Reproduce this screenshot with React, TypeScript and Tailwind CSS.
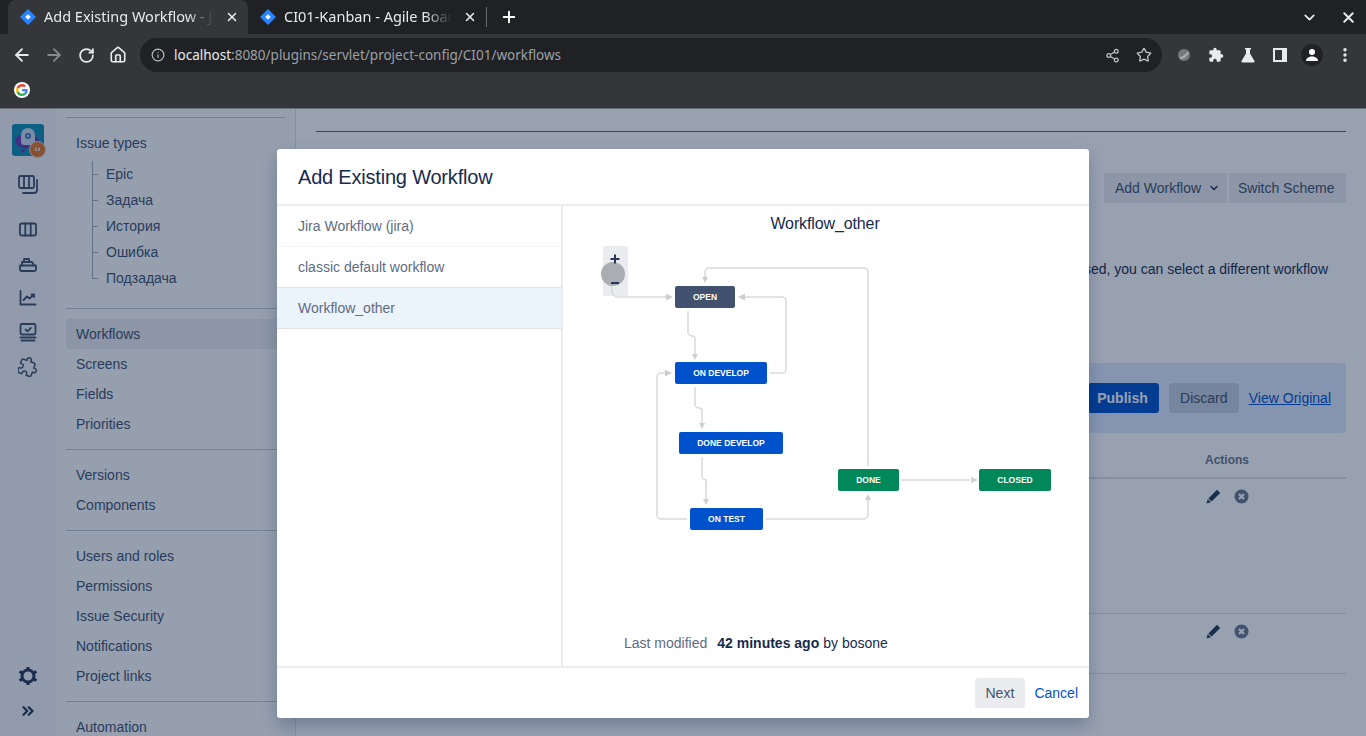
import React from 'react';
import {
  ArrowLeft,
  ArrowRight,
  RotateCw,
  Home,
  Info,
  Share2,
  Star,
  X,
  Plus,
  ChevronDown,
  ChevronsRight,
  MoreVertical,
} from 'lucide-react';

const FONT = "font-['Liberation_Sans','Noto_Sans_CJK_SC',sans-serif]";

const JiraIcon = () => (
  <svg width="16" height="16" viewBox="0 0 16 16" className="shrink-0">
    <path d="M8 0l8 8-8 8-8-8z" fill="#2684ff" />
    <path d="M8 5.2L10.8 8 8 10.8 5.2 8z" fill="#fff" />
  </svg>
);

const GoogleIcon = () => (
  <div className="w-4 h-4 rounded-full bg-white flex items-center justify-center">
    <svg width="12" height="12" viewBox="0 0 48 48">
      <path fill="#EA4335" d="M24 9.5c3.5 0 6.700 1.200 9.200 3.600l6.900-6.900C35.900 2.400 30.500 0 24 0 14.600 0 6.500 5.400 2.600 13.200l8 6.200C12.500 13.700 17.800 9.500 24 9.500z" />
      <path fill="#4285F4" d="M46.900 24.500c0-1.600-.1-3.100-.4-4.500H24v9h12.900c-.6 3-2.200 5.500-4.800 7.200l7.700 6c4.500-4.200 7.100-10.300 7.100-17.700z" />
      <path fill="#FBBC05" d="M10.500 28.600c-.5-1.500-.8-3-.8-4.600s.3-3.200.8-4.600l-8-6.200C.9 16.500 0 20.100 0 24s.9 7.500 2.600 10.800l7.900-6.200z" />
      <path fill="#34A853" d="M24 48c6.500 0 11.900-2.100 15.900-5.800l-7.700-6c-2.200 1.500-4.900 2.300-8.200 2.300-6.200 0-11.500-4.200-13.400-9.900l-8 6.200C6.500 42.600 14.600 48 24 48z" />
    </svg>
  </div>
);

const Tab = ({ title, active, width }: { title: string; active?: boolean; width: string }) => (
  <div className={`flex items-center h-[34px] pl-3 pr-[9px] ${width} ${active ? 'bg-[#35363a] rounded-t-lg' : ''}`}>
    <JiraIcon />
    <span className="ml-2 flex-1 overflow-hidden whitespace-nowrap text-[14.500px] text-[#e8eaed] font-['Noto_Sans',sans-serif] [mask-image:linear-gradient(90deg,#000_82%,transparent_98%)]">
      {title}
    </span>
    <X size={14} strokeWidth={2.6} className="ml-[8px] text-[#e8eaed] shrink-0" />
  </div>
);

const BrowserChrome = () => (
  <div className="h-[109px] bg-[#35363a] border-b border-[#6a6e78] flex flex-col shrink-0">
    <div className="h-[34px] bg-[#202124] flex items-center">
      <div className="w-2" />
      <Tab title="Add Existing Workflow - Jira" active width="w-[240px]" />
      <Tab title="CI01-Kanban - Agile Board" width="w-[238px]" />
      <div className="w-px h-5 bg-[#6a6b6e]" />
      <Plus size={18} strokeWidth={2.6} className="ml-[13px] text-white" />
      <div className="flex-1" />
      <ChevronDown size={17} strokeWidth={2.4} className="text-[#e8eaed] mr-[22px]" />
      <X size={17} strokeWidth={2.8} className="text-[#e8eaed] mr-[9px]" />
    </div>
    <div className="h-[38px] flex items-center pt-[4px]">
      <ArrowLeft size={20} strokeWidth={2.2} className="ml-3 text-[#e8eaed]" />
      <ArrowRight size={20} strokeWidth={2.2} className="ml-3 text-[#85878a]" />
      <RotateCw size={17} strokeWidth={2.5} className="ml-[14px] text-[#e8eaed]" />
      <Home size={18} strokeWidth={2.2} className="ml-[14px] text-[#e8eaed]" />
      <div className="ml-[13px] w-[1022px] h-[34px] rounded-full bg-[#202124] flex items-center">
        <Info size={14} className="ml-[11px] text-[#bdc1c6]" />
        <span className="ml-[9px] text-[13.5px] font-['Noto_Sans',sans-serif] text-[#e8eaed]">
          localhost<span className="text-[#9aa0a6]">:8080/plugins/servlet/project-config/CI01/workflows</span>
        </span>
        <div className="flex-1" />
        <Share2 size={15} className="text-[#bdc1c6]" />
        <Star size={16} strokeWidth={2} className="ml-[16px] mr-[10px] text-[#bdc1c6]" />
      </div>
      <svg width="14" height="14" viewBox="0 0 14 14" className="ml-[15px]">
        <circle cx="7" cy="7" r="6" fill="#75777b" />
        <path d="M2 9c3 0 6-2 9-6l1 2c-2 3-5 6-8 6z" fill="#a8aaad" />
      </svg>
      <svg width="16" height="16" viewBox="0 0 24 24" className="ml-[17px]" fill="#e8eaed">
        <path d="M20.500 11H19V7a2 2 0 0 0-2-2h-4V3.500a2.500 2.500 0 0 0-5 0V5H4a2 2 0 0 0-2 2v3.800h1.500a2.700 2.700 0 0 1 0 5.400H2V20a2 2 0 0 0 2 2h3.800v-1.500a2.700 2.700 0 0 1 5.400 0V22H17a2 2 0 0 0 2-2v-4h1.500a2.500 2.500 0 0 0 0-5z" />
      </svg>
      <svg width="16" height="16" viewBox="0 0 16 16" className="ml-4" fill="#e8eaed">
        <path d="M5 1h6v1.500h-1v4l4.500 7.500a1 1 0 0 1-.9 1.500H2.400a1 1 0 0 1-.9-1.500L6 6.500v-4H5z" />
      </svg>
      <svg width="14" height="14" viewBox="0 0 14 14" className="ml-[17px]">
        <rect width="14" height="14" fill="#e8eaed" />
        <rect x="2" y="2" width="7" height="10" fill="#35363a" />
      </svg>
      <div className="ml-[14px] w-[22px] h-[22px] rounded-full bg-[#202124] flex items-center justify-center">
        <svg width="14" height="14" viewBox="0 0 14 14" fill="#fff">
          <circle cx="7" cy="4" r="3" />
          <path d="M1 13c0-3 3-4.500 6-4.500s6 1.500 6 4.500z" />
        </svg>
      </div>
      <MoreVertical size={18} strokeWidth={2.6} className="ml-[13px] text-[#e8eaed]" />
    </div>
    <div className="flex-1 flex items-center pl-[14px] -mt-px">
      <GoogleIcon />
    </div>
  </div>
);

const railStroke = { fill: 'none', stroke: '#42526e', strokeWidth: 1.8, strokeLinecap: 'round', strokeLinejoin: 'round' } as const;

const Rail = () => (
  <div className="w-14 shrink-0 bg-[#f4f5f7] flex flex-col items-center h-[627px]">
    <div className="relative mt-[15px] w-8 h-8 rounded-[3px] bg-[#0d8fb3]">
      <svg width="32" height="32" viewBox="0 0 32 32">
        <ellipse cx="15" cy="17" rx="12" ry="7.500" fill="#6a3fb5" />
        <path d="M9 11a7 7 0 0 1 14 0v7a3 3 0 0 1-3 3h-8a3 3 0 0 1-3-3z" fill="#cdd9ec" />
        <circle cx="16" cy="12" r="3" fill="#3a78c0" />
        <circle cx="16" cy="12" r="1" fill="#fff" />
        <path d="M9 25l1 4 4-3z" fill="#6a3fb5" />
      </svg>
      <div className="absolute -right-[2px] -bottom-[2px] w-[17px] h-[17px] rounded-full bg-[#e0762a] border-[1.5px] border-[#d9dde3] flex items-center justify-center text-[9px] leading-none font-bold text-white">
        ‹›
      </div>
    </div>
    <svg width="22" height="22" viewBox="0 0 22 22" className="mt-[18px]">
      <g {...railStroke}>
        <rect x="2" y="2" width="15" height="12" rx="1.500" />
        <path d="M7 2v12M12 2v12" />
        <path d="M20 6v10a3 3 0 0 1-3 3H6" />
      </g>
    </svg>
    <svg width="20" height="20" viewBox="0 0 20 20" className="mt-[24px]">
      <g {...railStroke}>
        <rect x="2" y="3.500" width="16" height="12" rx="1.500" />
        <path d="M7.300 3.500v12M12.700 3.500v12" />
      </g>
    </svg>
    <svg width="20" height="20" viewBox="0 0 20 20" className="mt-[14px]">
      <g {...railStroke}>
        <path d="M2 11.500h16v4a1.500 1.500 0 0 1-1.500 1.500h-13A1.500 1.500 0 0 1 2 15.500z" />
        <path d="M4 11.500V8h10l2 3.500M6 8V5h5v3" />
      </g>
    </svg>
    <svg width="20" height="20" viewBox="0 0 20 20" className="mt-[14px]">
      <g {...railStroke}>
        <path d="M2.500 3v13.500h15" />
        <path d="M5.500 12l3.500-3.500 2.500 2L16 6.500M13.500 6.500H16V9" />
      </g>
    </svg>
    <svg width="20" height="22" viewBox="0 0 20 22" className="mt-[14px]">
      <g {...railStroke}>
        <rect x="2.500" y="2" width="15" height="10.500" rx="1.500" />
        <path d="M7.500 7.500l2 1.800 3.300-3.300M2.500 15.500h15M3.500 18.500h13" />
      </g>
    </svg>
    <svg width="20" height="20" viewBox="0 0 24 24" className="mt-[13px]">
      <path
        {...railStroke}
        d="M20.500 11H19V7a2 2 0 0 0-2-2h-4V3.500a2.500 2.500 0 0 0-5 0V5H4a2 2 0 0 0-2 2v3.800h1.500a2.700 2.700 0 0 1 0 5.400H2V20a2 2 0 0 0 2 2h3.800v-1.500a2.700 2.700 0 0 1 5.400 0V22H17a2 2 0 0 0 2-2v-4h1.500a2.500 2.500 0 0 0 0-5z"
        transform="rotate(20 12 12)"
      />
    </svg>
    <div className="flex-1" />
    <svg width="20" height="20" viewBox="0 0 20 20" className="mb-[16px]">
      <circle cx="10" cy="10" r="6" fill="none" stroke="#253858" strokeWidth="3" />
      <g stroke="#253858" strokeWidth="3">
        <path d="M10 1v3M10 16v3M1.500 5.500l2.600 1.500M15.900 13l2.600 1.500M1.500 14.500L4.100 13M15.900 7l2.600-1.500" />
      </g>
    </svg>
    <ChevronsRight size={18} strokeWidth={3} className="text-[#253858] mb-[16px]" />
  </div>
);

const NavItem = ({ label, active }: { label: string; active?: boolean }) => (
  <div className={`h-[30px] flex items-center px-[10px] rounded-[3px] text-[14px] leading-4 text-[#42526e] ${active ? 'bg-[#ebecf0]' : ''}`}>
    {label}
  </div>
);

const TreeItem = ({ label, last }: { label: string; last?: boolean }) => (
  <div className="h-[26px] flex items-center ml-[26px] text-[14px] text-[#42526e]">
    <div className="w-[6px] self-stretch flex flex-col">
      <div className="flex-1 border-l border-b border-[#a5adba]" />
      <div className={`flex-1 ${last ? '' : 'border-l border-[#a5adba]'}`} />
    </div>
    <span className="ml-2">{label}</span>
  </div>
);

const NAV_GROUPS = [
  ['Workflows', 'Screens', 'Fields', 'Priorities'],
  ['Versions', 'Components'],
  ['Users and roles', 'Permissions', 'Issue Security', 'Notifications', 'Project links'],
  ['Automation'],
];

const Nav = () => (
  <div className="w-60 shrink-0 bg-[#fafbfc] border-r border-[#dfe1e6] pt-2 pl-[10px] pr-[10px] h-[627px] overflow-hidden">
    <div className="border-t border-[#c1c7d0] pt-[10px]">
      <NavItem label="Issue types" />
      <div className="mt-[3px] mb-[17px]">
        <TreeItem label="Epic" />
        <TreeItem label="Задача" />
        <TreeItem label="История" />
        <TreeItem label="Ошибка" />
        <TreeItem label="Подзадача" last />
      </div>
    </div>
    {NAV_GROUPS.map(group => (
      <div key={group[0]} className="border-t border-[#c1c7d0] py-[10px]">
        {group.map(item => (
          <NavItem key={item} label={item} active={item === 'Workflows'} />
        ))}
      </div>
    ))}
  </div>
);

const PencilIcon = () => (
  <svg width="15" height="15" viewBox="0 0 15 15" fill="#253858">
    <path d="M11 .8l3.200 3.200-8.600 8.600-3.200-3.200zM1.700 10.100l3.200 3.200-4.400 1.200z" />
  </svg>
);

const RemoveIcon = () => (
  <svg width="15" height="15" viewBox="0 0 15 15" className="ml-[13px]">
    <circle cx="7.500" cy="7.500" r="7" fill="#6b778c" />
    <path d="M5 5l5 5M10 5l-5 5" stroke="#fff" strokeWidth="2.200" />
  </svg>
);

const ActionRow = ({ height }: { height: string }) => (
  <div className={`${height} border-b border-[#dfe1e6] flex justify-end pr-[97px] pt-[10px]`}>
    <PencilIcon />
    <RemoveIcon />
  </div>
);

const Content = () => (
  <div className="flex-1 min-w-0 bg-white px-5 pt-[22px] h-[627px] overflow-hidden">
    <div className="border-t border-[#5a5bb5]" />
    <div className="mt-[41px] flex justify-end gap-[2px] text-[14px] text-[#42526e]">
      <div className="h-[30px] w-[123px] bg-[#ebecf0] rounded-l-[3px] flex items-center pl-[11px]">
        Add Workflow
        <ChevronDown size={12} strokeWidth={3} className="ml-[7px] text-[#253858]" />
      </div>
      <div className="h-[30px] w-[117px] bg-[#ebecf0] rounded-r-[3px] flex items-center pl-[9px]">Switch Scheme</div>
    </div>
    <div className="mt-[56px] h-5 flex justify-end pr-[18px] text-[14px] leading-5 text-[#172b4d] whitespace-nowrap">
      If this workflow is not used, you can select a different workflow
    </div>
    <div className="mt-[84px] h-[70px] bg-[#deebff] rounded-[3px] flex justify-end items-center pr-[15px] text-[14px]">
      <div className="h-[30px] pl-[9px] pr-[11px] bg-[#0052cc] text-white font-bold rounded-[3px] flex items-center">Publish</div>
      <div className="ml-[10px] h-[30px] w-[70px] bg-[#c5d0e2] text-[#42526e] rounded-[3px] flex items-center justify-center">Discard</div>
      <span className="ml-[10px] text-[#0052cc] underline">View Original</span>
    </div>
    <div className="h-[46px] border-b-2 border-[#dfe1e6] flex justify-end items-center pr-[97px] pt-[9px] text-[12px] font-bold text-[#6b778c]">
      Actions
    </div>
    <ActionRow height="h-[135px]" />
    <ActionRow height="h-[60px]" />
  </div>
);

const NODES = [
  { label: 'OPEN', left: 111, top: 50, width: 60, color: 'bg-[#42526e]' },
  { label: 'ON DEVELOP', left: 111, top: 126, width: 92, color: 'bg-[#0052cc]' },
  { label: 'DONE DEVELOP', left: 115, top: 196, width: 104, color: 'bg-[#0052cc]' },
  { label: 'ON TEST', left: 126, top: 272, width: 73, color: 'bg-[#0052cc]' },
  { label: 'DONE', left: 274, top: 233, width: 61, color: 'bg-[#00875a]' },
  { label: 'CLOSED', left: 415, top: 233, width: 72, color: 'bg-[#00875a]' },
];

// page coordinates, the svg viewBox takes the canvas origin away
const EDGES = [
  'M612 286v5a6 6 0 0 0 6 6h48',
  'M688 311v21a4 4 0 0 0 4 4a3 3 0 0 1 3 3v15',
  'M770 373h12a4 4 0 0 0 4-4v-68a4 4 0 0 0-4-4h-38',
  'M868 466V272a4 4 0 0 0-4-4H709a4 4 0 0 0-4 4v5',
  'M695 387v17a4 4 0 0 0 4 4a3 3 0 0 1 3 3v12',
  'M702 457v19a4 4 0 0 0 4 4v19',
  'M687 519h-26a4 4 0 0 1-4-4V377a4 4 0 0 1 4-4h4',
  'M766 519h98a4 4 0 0 0 4-4v-15',
  'M901 480h69',
];

const ARROWS = [
  'M666 293.500l7 3.500-7 3.500z',
  'M692 354h6l-3 6z',
  'M745 293.500l-7 3.500 7 3.500z',
  'M702 277h6l-3 6z',
  'M699 423h6l-3 6z',
  'M703 499h6l-3 6z',
  'M665 369.500l7 3.500-7 3.500z',
  'M865 500h6l-3-6z',
  'M971 477l7 3-7 3z',
];

const WorkflowDiagram = () => (
  <div className="relative h-[390px] shrink-0 ml-px">
    <svg width="523" height="390" viewBox="564 236 523 390" className="absolute inset-0">
      <rect x="603" y="246" width="25" height="50" rx="2" fill="#ebecf0" />
      <circle cx="613" cy="274" r="12" fill="#aaadb2" />
      {EDGES.map(d => (
        <path key={d} d={d} fill="none" stroke="#d9d9d9" strokeWidth="1.500" />
      ))}
      {ARROWS.map(d => (
        <path key={d} d={d} fill="#cfcfcf" />
      ))}
      <path d="M615 254.500v9M610.500 259h9" stroke="#253858" strokeWidth="2" />
      <path d="M611 283h8" stroke="#253858" strokeWidth="2" />
    </svg>
    {NODES.map(node => (
      <div
        key={node.label}
        className={`absolute h-[22px] rounded-[2px] flex items-center justify-center text-[8.500px] font-bold text-white ${node.color}`}
        style={{ left: node.left, top: node.top, width: node.width }}
      >
        {node.label}
      </div>
    ))}
  </div>
);

const Modal = () => (
  <div className="absolute left-[277px] top-[149px] w-[812px] h-[569px] bg-white rounded-[3px] shadow-[0_8px_16px_rgba(9,30,66,0.25)] flex flex-col">
    <div className="h-[57px] border-b-2 border-[#ebecf0] flex items-center pl-[21px] text-[20px] tracking-[-0.2px] text-[#172b4d] shrink-0">
      Add Existing Workflow
    </div>
    <div className="flex-1 flex min-h-0">
      <div className="w-[286px] border-r-2 border-[#ebecf0] text-[14px] text-[#5e6c84]">
        <div className="h-[41px] flex items-center pl-[21px] border-b border-[#f4f5f7]">Jira Workflow (jira)</div>
        <div className="h-[40px] flex items-center pl-[21px]">classic default workflow</div>
        <div className="h-[42px] flex items-center pl-[21px] bg-[#ebf3fb] border-y border-[#dfe1e6]">Workflow_other</div>
      </div>
      <div className="flex-1 min-w-0 flex flex-col">
        <div className="h-[36px] flex items-center justify-center text-[16px] tracking-[-0.12px] text-[#172b4d] shrink-0 -mb-[6px]">
          <span className="-ml-[2px]">Workflow_other</span>
        </div>
        <WorkflowDiagram />
        <div className="h-[20px] mt-[7px] pl-[61px] flex items-center text-[14px] whitespace-nowrap text-[#172b4d]">
          <span className="text-[#5e6c84]">Last modified</span>
          <span className="ml-[10px] font-bold">42 minutes ago</span>
          <span className="ml-1">by bosone</span>
        </div>
      </div>
    </div>
    <div className="h-[52px] border-t-2 border-[#ebecf0] flex justify-end items-center pr-[11px] text-[14px] shrink-0">
      <div className="h-[30px] w-[50px] bg-[#ebecf0] rounded-[3px] flex items-center justify-center text-[#42526e] pr-px">Next</div>
      <span className="ml-[9px] text-[#0052cc]">Cancel</span>
    </div>
  </div>
);

export default function App() {
  return (
    <div className={`w-[1366px] h-[736px] overflow-hidden flex flex-col ${FONT}`}>
      <BrowserChrome />
      <div className="relative flex-1 flex min-h-0">
        <Rail />
        <Nav />
        <Content />
        <div className="absolute inset-0 bg-[#091e42]/[0.42]" />
      </div>
      <div className="absolute inset-0 pointer-events-none">
        <Modal />
      </div>
    </div>
  );
}
